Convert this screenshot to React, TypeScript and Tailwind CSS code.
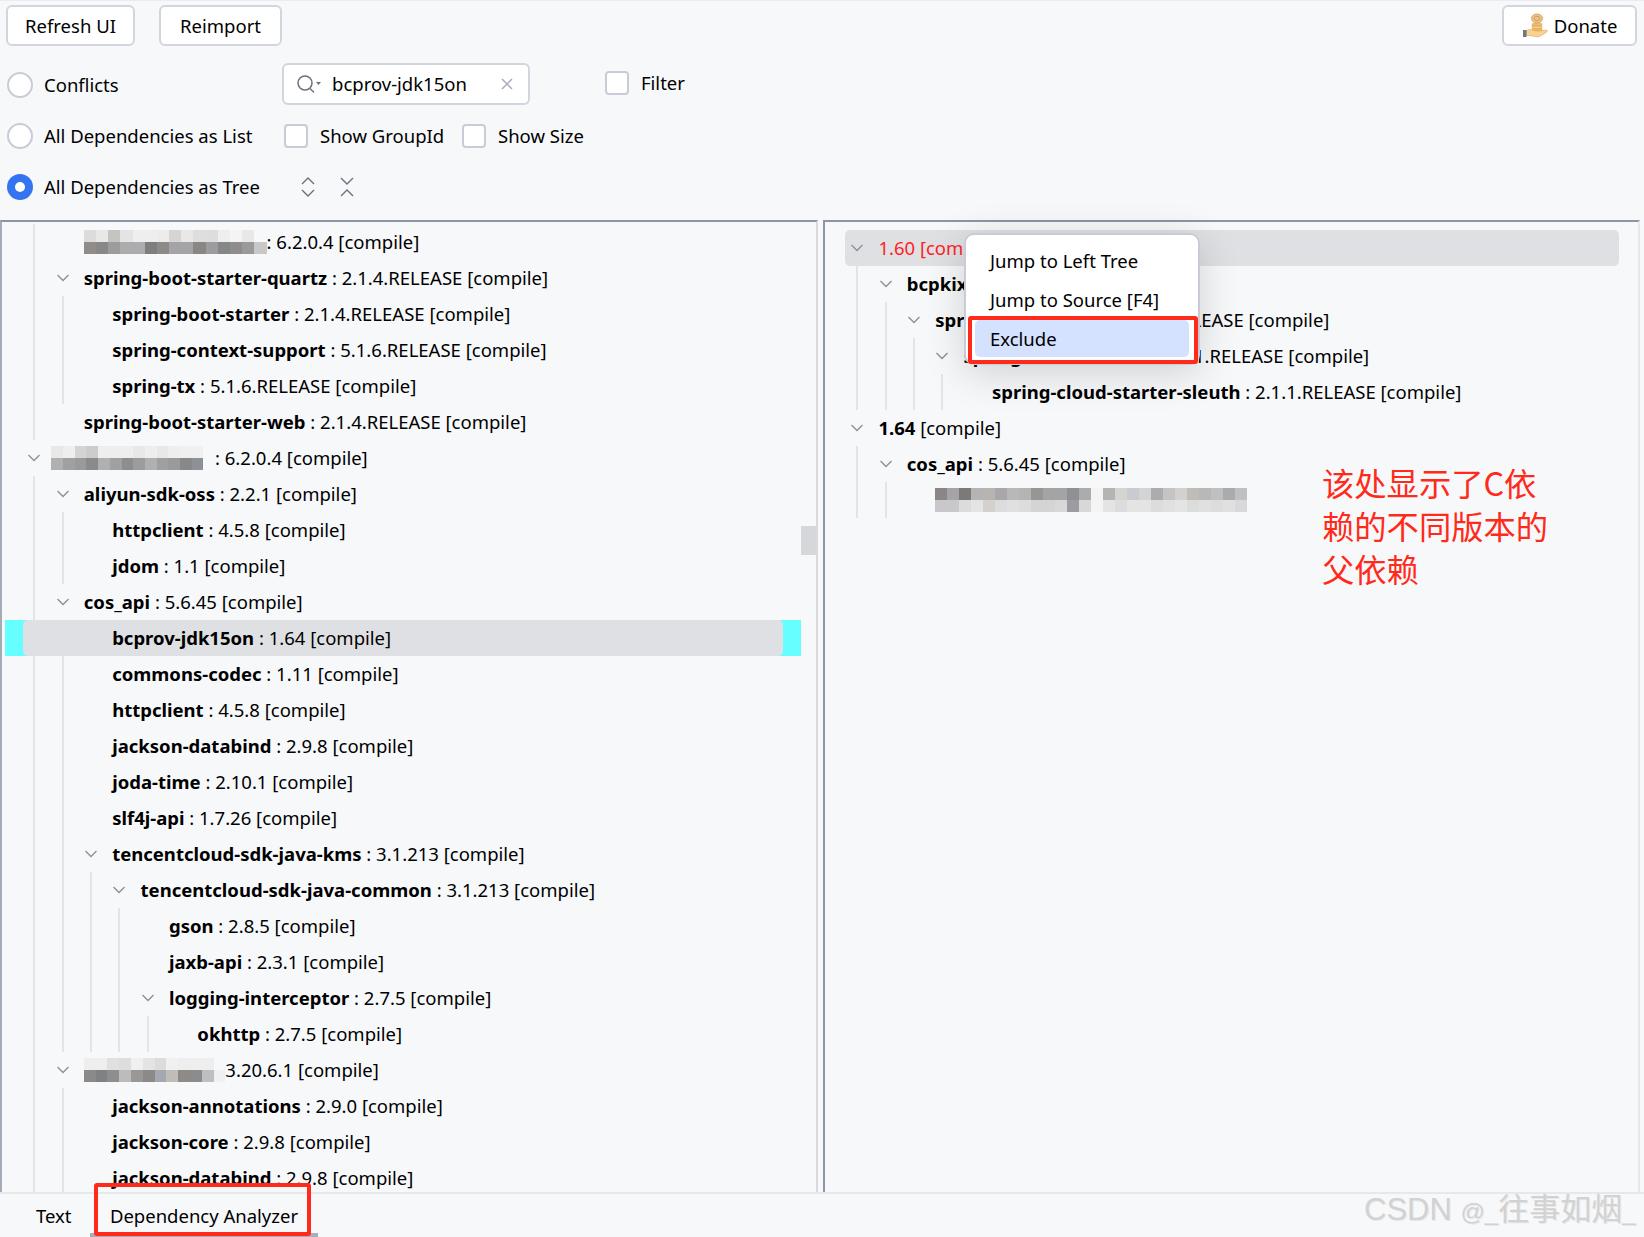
import React from "react";

type R = { d: number; chev?: boolean; g: number[]; name?: string; rest?: string; blur?: number; sel?: boolean; red?: boolean; hl?: boolean };

const L: R[] = [
  { d: 1, g: [0], blur: 1, rest: ": 6.2.0.4 [compile]" },
  { d: 1, chev: true, g: [0], name: "spring-boot-starter-quartz", rest: " : 2.1.4.RELEASE [compile]" },
  { d: 2, g: [0, 1], name: "spring-boot-starter", rest: " : 2.1.4.RELEASE [compile]" },
  { d: 2, g: [0, 1], name: "spring-context-support", rest: " : 5.1.6.RELEASE [compile]" },
  { d: 2, g: [0, 1], name: "spring-tx", rest: " : 5.1.6.RELEASE [compile]" },
  { d: 1, g: [0], name: "spring-boot-starter-web", rest: " : 2.1.4.RELEASE [compile]" },
  { d: 0, chev: true, g: [], blur: 2, rest: ": 6.2.0.4 [compile]" },
  { d: 1, chev: true, g: [0], name: "aliyun-sdk-oss", rest: " : 2.2.1 [compile]" },
  { d: 2, g: [0, 1], name: "httpclient", rest: " : 4.5.8 [compile]" },
  { d: 2, g: [0, 1], name: "jdom", rest: " : 1.1 [compile]" },
  { d: 1, chev: true, g: [0], name: "cos_api", rest: " : 5.6.45 [compile]" },
  { d: 2, g: [], sel: true, name: "bcprov-jdk15on", rest: " : 1.64 [compile]" },
  { d: 2, g: [0, 1], name: "commons-codec", rest: " : 1.11 [compile]" },
  { d: 2, g: [0, 1], name: "httpclient", rest: " : 4.5.8 [compile]" },
  { d: 2, g: [0, 1], name: "jackson-databind", rest: " : 2.9.8 [compile]" },
  { d: 2, g: [0, 1], name: "joda-time", rest: " : 2.10.1 [compile]" },
  { d: 2, g: [0, 1], name: "slf4j-api", rest: " : 1.7.26 [compile]" },
  { d: 2, chev: true, g: [0, 1], name: "tencentcloud-sdk-java-kms", rest: " : 3.1.213 [compile]" },
  { d: 3, chev: true, g: [0, 1, 2], name: "tencentcloud-sdk-java-common", rest: " : 3.1.213 [compile]" },
  { d: 4, g: [0, 1, 2, 3], name: "gson", rest: " : 2.8.5 [compile]" },
  { d: 4, g: [0, 1, 2, 3], name: "jaxb-api", rest: " : 2.3.1 [compile]" },
  { d: 4, chev: true, g: [0, 1, 2, 3], name: "logging-interceptor", rest: " : 2.7.5 [compile]" },
  { d: 5, g: [0, 1, 2, 3, 4], name: "okhttp", rest: " : 2.7.5 [compile]" },
  { d: 1, chev: true, g: [0], blur: 3, rest: "3.20.6.1 [compile]" },
  { d: 2, g: [0, 1], name: "jackson-annotations", rest: " : 2.9.0 [compile]" },
  { d: 2, g: [0, 1], name: "jackson-core", rest: " : 2.9.8 [compile]" },
  { d: 2, g: [0, 1], name: "jackson-databind", rest: " : 2.9.8 [compile]" },
];

const Rt: R[] = [
  { d: 0, chev: true, g: [], red: true, hl: true, rest: "1.60 [compile]" },
  { d: 1, chev: true, g: [0], name: "bcpkix-jdk15on", rest: " : 1.60 [compile]" },
  { d: 2, chev: true, g: [0, 1], name: "spring-security-rsa", rest: " : 1.0.7.RELEASE [compile]" },
  { d: 3, chev: true, g: [0, 1, 2], name: "spring-cloud-starter", rest: " : 2.1.1.RELEASE [compile]" },
  { d: 4, g: [0, 1, 2, 3], name: "spring-cloud-starter-sleuth", rest: " : 2.1.1.RELEASE [compile]" },
  { d: 0, chev: true, g: [], name: "1.64", rest: " [compile]" },
  { d: 1, chev: true, g: [0], name: "cos_api", rest: " : 5.6.45 [compile]" },
  { d: 2, g: [0, 1], blur: 4 },
];

const M: Record<number, { w: number; top: string[]; bot: string[] }> = {
  1: { w: 12.2, top: ["dcdcdc", "e8e8e8", "c4c4c0", "e4e4e4", "eeeeee", "eeeeee", "ececec", "d8d4d4", "e8e8e8", "dededf", "dddddd", "eeeeee", "f4f4f4", "e8e8e8", "f7f8fa"], bot: ["8f8c8a", "8a8886", "9c9c9c", "acacae", "acacae", "7e7e7e", "8e8a88", "a4a4a6", "a4a4a6", "8a8684", "9c9c9e", "848688", "8e8c8c", "9a9a9a", "c8c8c8"] },
  2: { w: 11.7, top: ["e8e8e8", "eeeeee", "d4d4d4", "cccccc", "eeeeee", "eeeeee", "eeeeee", "e8e8e8", "eeeeee", "e8e8e8", "eeeeee", "f0f0f0", "f0f0f0", "f7f8fa"], bot: ["b0b0b0", "a0a0a0", "9a9a9a", "8a8a8a", "b0b0b0", "a0a0a0", "8e8e8e", "9c9c9c", "b0b0b0", "a0a0a0", "9a9a9a", "888888", "8e9098", "f7f8fa"] },
  3: { w: 11.8, top: ["eeeeee", "eeeeee", "e0e0e0", "dddddd", "f0f0f0", "e4e4e4", "dcdcdc", "f0f0f0", "eeeeee", "eeeeee", "eeeeee", "f7f8fa"], bot: ["8a8a8a", "7e8284", "8e8e8e", "bcbcbc", "9a9896", "8c8a88", "a4a8b0", "c0bcb8", "8e8a86", "8c8c8c", "bcc0c0", "f0f0f0"] },
  4: { w: 12, top: ["8a8686", "a4a4a6", "7c7a76", "b4b4b4", "b8b4b0", "a8a8aa", "b8b8b8", "b4b4b4", "969694", "a4a4a4", "a4a4a4", "8e9094", "acacac", "f4f4f4", "b4b4b4", "d4d4d0", "c8ccd0", "d4d4d4", "acacb0", "c4c4c4", "d4d0d0", "c0bcb8", "b8b8b8", "c0c0c0", "a8acac", "c0c0c0"], bot: ["c8c8cc", "c8c8cc", "dcdcdc", "e4e4e4", "d4d0cc", "dcdcdc", "e0e0e0", "dcdcdc", "d4d4d4", "d4d4d4", "d8d8d8", "9c9ca0", "d8d8d8", "f4f4f4", "e4e4e4", "dcdcdc", "e4e4e4", "e4e4e4", "dcdcdc", "e0e0e0", "e4e4e4", "dcdcdc", "e0e0e0", "dcdcdc", "e0e0e0", "d8d8dc"] },
};

function Mosaic({ id }: { id: number }) {
  const m = M[id];
  return (
    <span className={"inline-flex flex-col shrink-0 " + (id === 2 ? "-ml-[4px]" : "")}>
      {[m.top, m.bot].map((row, i) => (
        <span key={i} className="flex">
          {row.map((c, j) => (
            <span key={j} className="h-[12px]" style={{ width: m.w, background: "#" + c }} />
          ))}
        </span>
      ))}
    </span>
  );
}

function Chev() {
  return (
    <svg width="14" height="8" viewBox="0 0 14 8" fill="none" stroke="#8b8f98" strokeWidth="1.3">
      <path d="M1.5 1l5.5 5.5L12.5 1" />
    </svg>
  );
}

function Row({ r, right }: { r: R; right?: boolean }) {
  const cells = [];
  for (let i = 0; i < r.d; i++) {
    cells.push(
      <div key={i} className="w-[28.4px] h-full shrink-0 flex justify-center">
        {r.g.includes(i) && <div className="w-[2px] h-full bg-[#e3e4e8]" />}
      </div>
    );
  }
  return (
    <div className={"h-9 flex shrink-0 px-[18px] " + (r.sel ? "bg-[#66ffff]" : "")}>
      <div className={"flex flex-1 items-center rounded-[5px] min-w-0 " + (r.sel || r.hl ? "bg-[#dfe0e3]" : "")}>
        <div className={"flex h-full items-center " + (right ? "-ml-[2px]" : "-ml-[3px]")}>
          {cells}
          <div className="w-[28.4px] shrink-0 flex justify-center">{r.chev && <Chev />}</div>
          <div className="w-[7px] shrink-0" />
          <div className={"whitespace-pre flex items-center " + (r.red ? "text-[#ff1f1f]" : "text-black")}>
            {r.blur && <Mosaic id={r.blur} />}
            {r.name && <b className="font-bold">{r.name}</b>}
            {r.rest && <span>{r.rest}</span>}
          </div>
        </div>
      </div>
    </div>
  );
}

function Btn({ children, cls }: { children: React.ReactNode; cls: string }) {
  return (
    <div className={"h-[41px] flex items-center justify-center bg-white border-2 border-[#d3d5de] rounded-[6px] " + cls}>{children}</div>
  );
}

function Radio({ on }: { on?: boolean }) {
  return on ? (
    <div className="w-[26px] h-[26px] rounded-full bg-[#3574f0] flex items-center justify-center shrink-0">
      <div className="w-[10px] h-[10px] rounded-full bg-white" />
    </div>
  ) : (
    <div className="w-[26px] h-[26px] rounded-full bg-white border-2 border-[#c9ccd6] shrink-0" />
  );
}

function Check() {
  return <div className="w-[24px] h-[24px] rounded-[4px] bg-white border-2 border-[#c9ccd6] shrink-0" />;
}

function Donate() {
  return (
    <svg width="26" height="26" viewBox="0 0 26 26">
      <ellipse cx="15" cy="5.500" rx="5.500" ry="4.500" fill="#eec48a" stroke="#c99a58" strokeWidth="0.8" />
      <ellipse cx="15" cy="5.500" rx="2.800" ry="2.200" fill="none" stroke="#c08f50" strokeWidth="0.7" />
      <rect x="10" y="10.500" width="10" height="2.600" rx="1" fill="#f2bc6a" stroke="#cf9a4c" strokeWidth="0.5" />
      <rect x="10" y="13.100" width="10" height="2.600" rx="1" fill="#f7cd86" stroke="#cf9a4c" strokeWidth="0.5" />
      <rect x="10" y="15.700" width="10" height="2.400" rx="1" fill="#f2bc6a" stroke="#cf9a4c" strokeWidth="0.5" />
      <path d="M4.500 17.500c3-1.500 5-1 8 .2l3.500.3 8.500-.8c1.200.2 1.200 1.300.2 1.900l-6.700 4.100c-2.500 1-6 .3-9-.7H4.500z" fill="#f8d28e" stroke="#d8a557" strokeWidth="0.6" />
      <rect x="1" y="17" width="3.500" height="7" fill="#6d7684" />
    </svg>
  );
}

export default function App() {
  return (
    <div className="relative w-[1644px] h-[1237px] overflow-hidden bg-[#f7f8fa] flex flex-col text-[18.5px] text-black font-['Noto_Sans','Noto_Sans_CJK_SC',sans-serif]">
      <div className="h-[220px] shrink-0 flex flex-col border-t border-[#ebecf0]">
        <div className="h-[59px] shrink-0 pt-[4px] pl-[6px] pr-[7px] flex items-start">
          <Btn cls="w-[129px]">Refresh UI</Btn>
          <Btn cls="w-[123px] ml-[24px]">Reimport</Btn>
          <div className="flex-1" />
          <Btn cls="w-[135px] gap-[6px]">
            <Donate />
            <span>Donate</span>
          </Btn>
        </div>
        <div className="h-[50px] shrink-0 flex items-center pl-[7px]">
          <div className="w-[275px] flex items-center gap-[11px] shrink-0">
            <Radio />
            <span>Conflicts</span>
          </div>
          <div className="w-[248px] h-[42px] -mt-[3px] bg-white border-2 border-[#d3d5de] rounded-[6px] flex items-center pl-[12px] pr-[15px] shrink-0">
            <svg width="26" height="22" viewBox="0 0 26 22" fill="none" stroke="#6c707e" strokeWidth="1.5">
              <circle cx="9" cy="10" r="7" />
              <path d="M14 15.500l4 4" />
              <path d="M20 9h5l-2.500 3z" fill="#6c707e" stroke="none" />
            </svg>
            <span className="ml-[10px] flex-1">bcprov-jdk15on</span>
            <svg width="12" height="12" viewBox="0 0 12 12" stroke="#a8adbd" strokeWidth="1.500">
              <path d="M1 1l10 10M11 1L1 11" />
            </svg>
          </div>
          <div className="ml-[75px] -mt-[4px] flex items-center gap-[12px]">
            <Check />
            <span>Filter</span>
          </div>
        </div>
        <div className="h-[52px] shrink-0 flex items-center pl-[7px]">
          <div className="w-[277px] flex items-center gap-[11px] shrink-0">
            <Radio />
            <span>All Dependencies as List</span>
          </div>
          <div className="w-[178px] flex items-center gap-[12px] shrink-0">
            <Check />
            <span>Show GroupId</span>
          </div>
          <div className="flex items-center gap-[12px]">
            <Check />
            <span>Show Size</span>
          </div>
        </div>
        <div className="h-[50px] shrink-0 flex items-center pl-[7px]">
          <div className="w-[293px] flex items-center gap-[11px] shrink-0">
            <Radio on />
            <span>All Dependencies as Tree</span>
          </div>
          <svg width="16" height="22" viewBox="0 0 16 22" fill="none" stroke="#6c707e" strokeWidth="1.400">
            <path d="M2 8l6-6 6 6M2 14l6 6 6-6" />
          </svg>
          <svg className="ml-[23px]" width="16" height="22" viewBox="0 0 16 22" fill="none" stroke="#6c707e" strokeWidth="1.400">
            <path d="M2 2l6 6 6-6M2 20l6-6 6 6" />
          </svg>
        </div>
      </div>

      <div className="flex-1 min-h-0 flex">
        <div className="w-[818px] shrink-0 border-t-2 border-t-[#8c95a5] border-l-2 border-l-[#a4abb8] border-r-2 border-r-[#d8dae0] flex overflow-hidden">
          <div className="w-[3px] shrink-0" />
          <div className="w-[796px] shrink-0 flex flex-col pt-[2px]">
            {L.map((r, i) => (
              <Row key={i} r={r} />
            ))}
          </div>
          <div className="flex-1 pt-[304px]">
            <div className="w-[15px] h-[29px] bg-[#d6d7da]" />
          </div>
        </div>
        <div className="w-[5px] shrink-0" />
        <div className="w-[817px] shrink-0 border-t-2 border-t-[#8c95a5] border-l-2 border-l-[#8c95a5] border-r-2 border-r-[#e6e8ec] flex flex-col pt-[8px] pl-[2px] pr-[1px] overflow-hidden">
          {Rt.map((r, i) => (
            <Row key={i} r={r} right />
          ))}
        </div>
      </div>

      <div className="h-[45px] shrink-0 border-t-2 border-[#e6e8ec] flex items-stretch relative">
        <div className="w-[90px] flex items-center pl-[36px] shrink-0">Text</div>
        <div className="w-[228px] pt-[4px] flex items-center justify-center border-b-4 border-[#a9adbb] shrink-0">Dependency Analyzer</div>
      </div>

      <div className="absolute left-[964px] top-[233px] w-[236px] h-[132px] bg-white rounded-[10px] border-2 border-[#c9ccd6] shadow-[0_8px_40px_rgba(0,0,0,0.16)] flex flex-col pt-[7px]">
        <div className="h-[38px] shrink-0 flex items-center pl-[24px]">Jump to Left Tree</div>
        <div className="h-[40px] shrink-0 flex items-center pl-[24px]">Jump to Source [F4]</div>
        <div className="h-[37px] mx-[9px] shrink-0 flex items-center pl-[15px] bg-[#d4e2ff] rounded-[5px]">Exclude</div>
      </div>
      <div className="absolute left-[968px] top-[316px] w-[230px] h-[48px] border-[4px] border-[#ff2a1a] rounded-[3px]" />
      <div className="absolute left-[94px] top-[1183px] w-[217px] h-[53px] border-[4px] border-[#ff2a1a] rounded-[3px]" />
      <div className="absolute left-[1322px] top-[461px] w-[240px] text-[32.3px] leading-[43px] text-[#ff2a1a] font-['Noto_Sans_CJK_SC',sans-serif]">
        该处显示了C依
        <br />
        赖的不同版本的
        <br />
        父依赖
      </div>
      <div className="absolute left-[1364px] top-[1188px] text-[31px] leading-[44px] text-[#d2d2d2] whitespace-nowrap font-['Liberation_Sans','Noto_Sans_CJK_SC',sans-serif] [text-shadow:1px_1px_0_#e8e8e8]">
        CSDN <span className="text-[24px]">@_</span>往事如烟<span className="text-[24px]">_</span>
      </div>
    </div>
  );
}
